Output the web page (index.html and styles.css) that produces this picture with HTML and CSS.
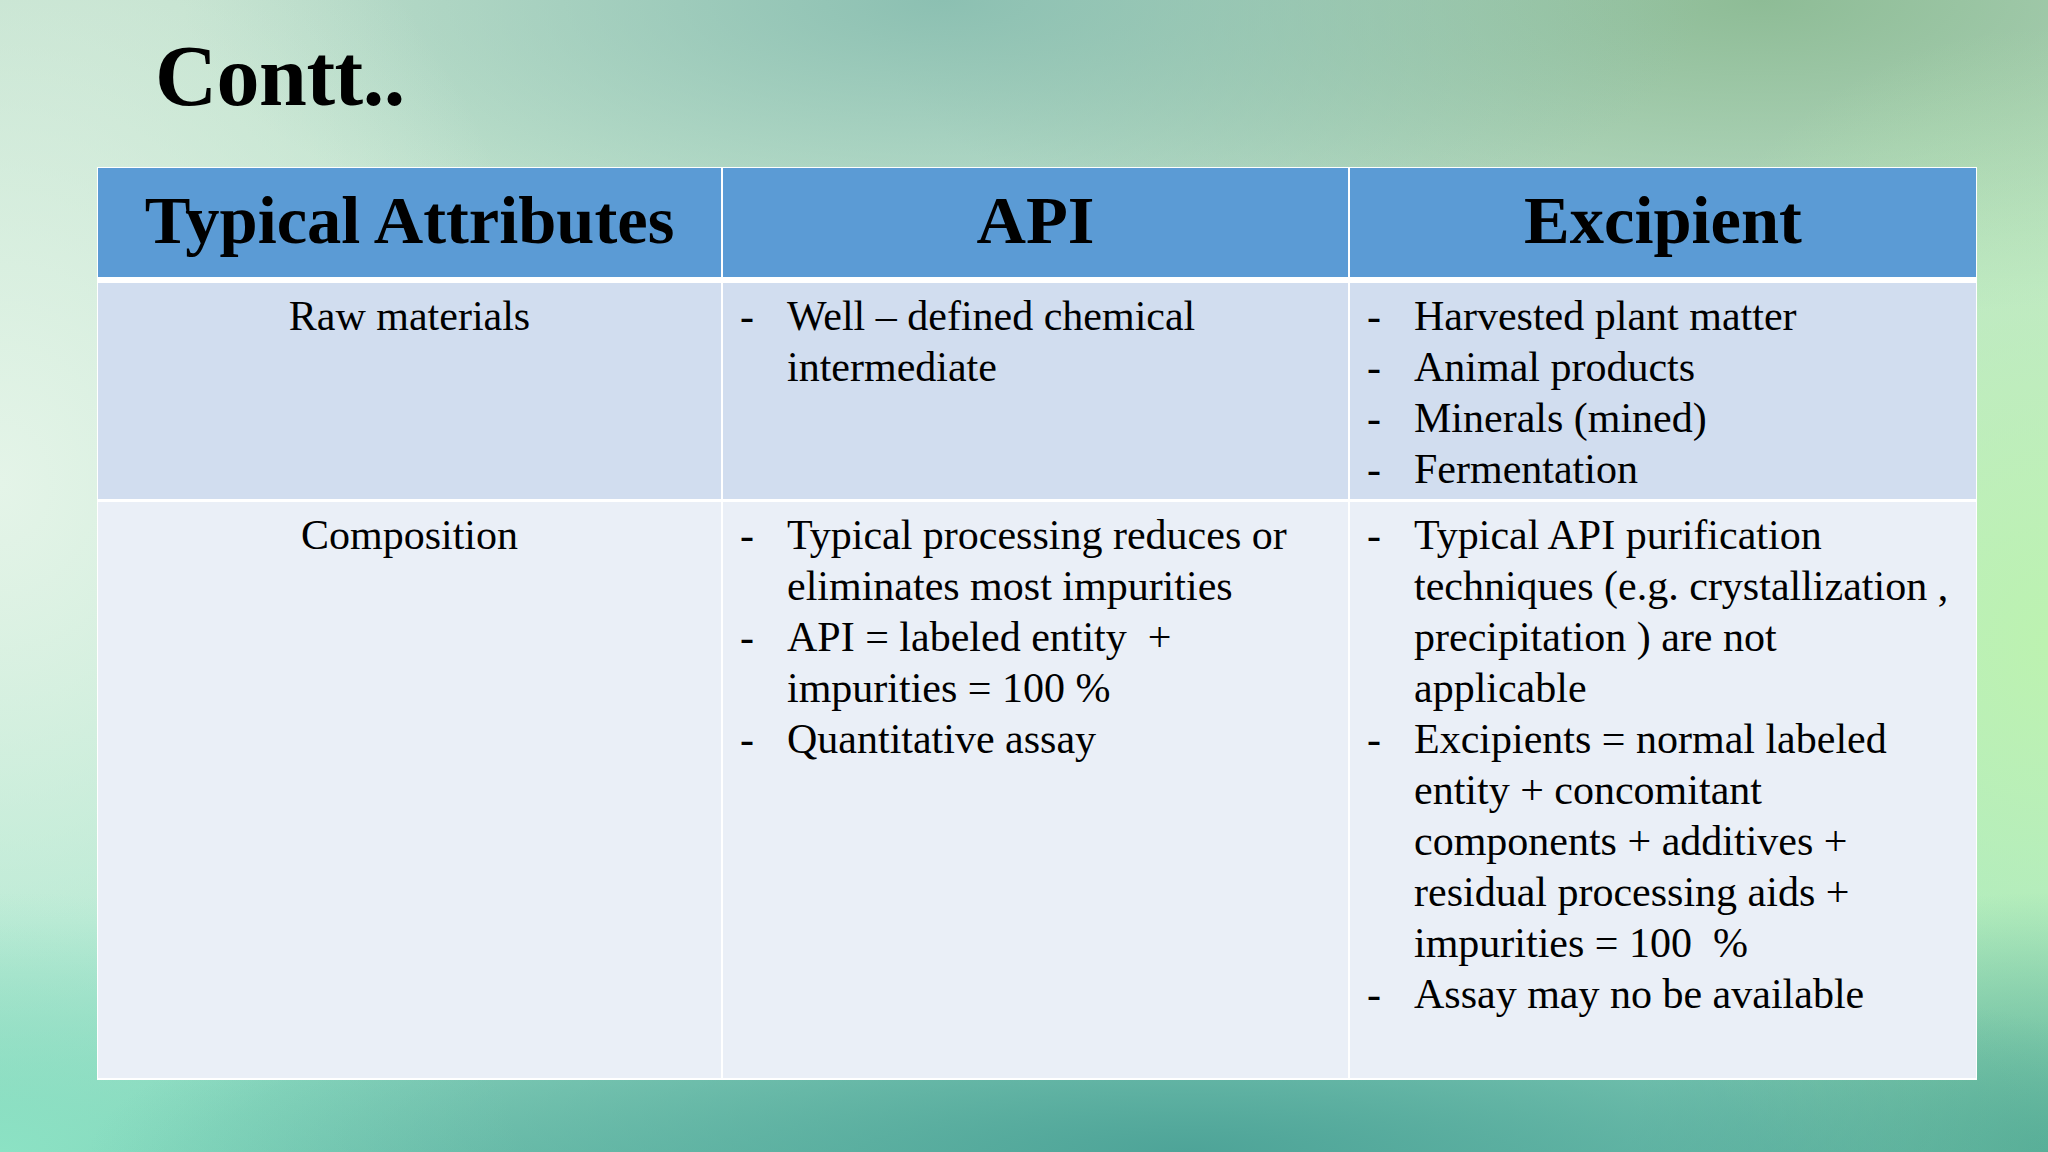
FILE: index.html
```html
<!DOCTYPE html>
<html lang="en">
<head>
<meta charset="utf-8">
<title>Contt..</title>
<link rel="stylesheet" href="styles.css">
</head>
<body>
<div class="slide">
  <h1 class="title">Contt..</h1>
  <div class="table">
    <div class="cell head">Typical Attributes</div>
    <div class="cell head">API</div>
    <div class="cell head">Excipient</div>

    <div class="cell band1 center">Raw materials</div>
    <div class="cell band1">
      <ul class="list">
        <li><span class="dash">-</span><span class="txt">Well – defined chemical<br>intermediate</span></li>
      </ul>
    </div>
    <div class="cell band1">
      <ul class="list">
        <li><span class="dash">-</span><span class="txt">Harvested plant matter</span></li>
        <li><span class="dash">-</span><span class="txt">Animal products</span></li>
        <li><span class="dash">-</span><span class="txt">Minerals (mined)</span></li>
        <li><span class="dash">-</span><span class="txt">Fermentation</span></li>
      </ul>
    </div>

    <div class="cell band2 center">Composition</div>
    <div class="cell band2">
      <ul class="list">
        <li><span class="dash">-</span><span class="txt">Typical processing reduces or<br>eliminates most impurities</span></li>
        <li><span class="dash">-</span><span class="txt">API = labeled entity &nbsp;+<br>impurities = 100 %</span></li>
        <li><span class="dash">-</span><span class="txt">Quantitative assay</span></li>
      </ul>
    </div>
    <div class="cell band2">
      <ul class="list">
        <li><span class="dash">-</span><span class="txt">Typical API purification<br>techniques (e.g. crystallization ,<br>precipitation ) are not<br>applicable</span></li>
        <li><span class="dash">-</span><span class="txt">Excipients = normal labeled<br>entity + concomitant<br>components + additives +<br>residual processing aids +<br>impurities = 100 &nbsp;%</span></li>
        <li><span class="dash">-</span><span class="txt">Assay may no be available</span></li>
      </ul>
    </div>
  </div>
</div>
</body>
</html>
```

FILE: styles.css
```css
html, body {
  margin: 0;
  padding: 0;
}

body {
  width: 2048px;
  height: 1152px;
  overflow: hidden;
  font-family: "Liberation Serif", "Times New Roman", serif;
  color: #000;
  background:
    radial-gradient(ellipse 1100px 210px at 58% 100%, rgba(78,164,152,1), rgba(78,164,152,0) 100%),
    radial-gradient(ellipse 420px 260px at 100% 100%, rgba(92,178,152,1), rgba(92,178,152,0) 100%),
    radial-gradient(ellipse 520px 260px at 0% 100%, rgba(140,226,196,1), rgba(140,226,196,0) 100%),
    radial-gradient(ellipse 480px 620px at 100% 56%, rgba(188,242,176,1), rgba(188,242,176,0) 100%),
    radial-gradient(ellipse 560px 700px at 0% 42%, rgba(228,244,232,1), rgba(228,244,232,0) 100%),
    radial-gradient(ellipse 760px 280px at 46% 0%, rgba(140,192,178,1), rgba(140,192,178,0) 100%),
    radial-gradient(ellipse 900px 320px at 86% 0%, rgba(142,188,150,1), rgba(142,188,150,0) 100%),
    linear-gradient(to bottom, #c0e0cc 0%, #c2e8d0 45%, #a8e6cc 80%, #78c8b2 100%);
}

.slide {
  display: flex;
  flex-direction: column;
  padding-top: 33px;
}

.title {
  margin: 0 0 48px 0;
  padding-left: 155px;
  font-size: 86px;
  line-height: 86px;
  font-weight: bold;
  letter-spacing: -0.5px;
}

.table {
  margin-left: 97px;
  width: 1880px;
  box-sizing: border-box;
  display: grid;
  grid-template-columns: 623px 625px 626px;
  grid-template-rows: 112px 216px 576px;
  column-gap: 2px;
  row-gap: 3px;
  padding: 1px;
  background: #ffffff;
  border-bottom: 1px solid #ffffff;
}

.cell {
  box-sizing: border-box;
  font-size: 42px;
  line-height: 51px;
  padding-top: 8px;
}

.head {
  background: #5b9bd5;
  margin-bottom: 3px;
  padding: 0 0 6px 0;
  font-size: 68.5px;
  line-height: 68px;
  font-weight: bold;
  display: flex;
  align-items: center;
  justify-content: center;
}

.band1 {
  background: #d1ddef;
}

.band2 {
  background: #eaeff7;
}

.center {
  text-align: center;
}

.list {
  list-style: none;
  margin: 0;
  padding: 0 0 0 17px;
}

.list li {
  display: flex;
}

.dash {
  flex: 0 0 47px;
}

.txt {
  white-space: nowrap;
}
```
